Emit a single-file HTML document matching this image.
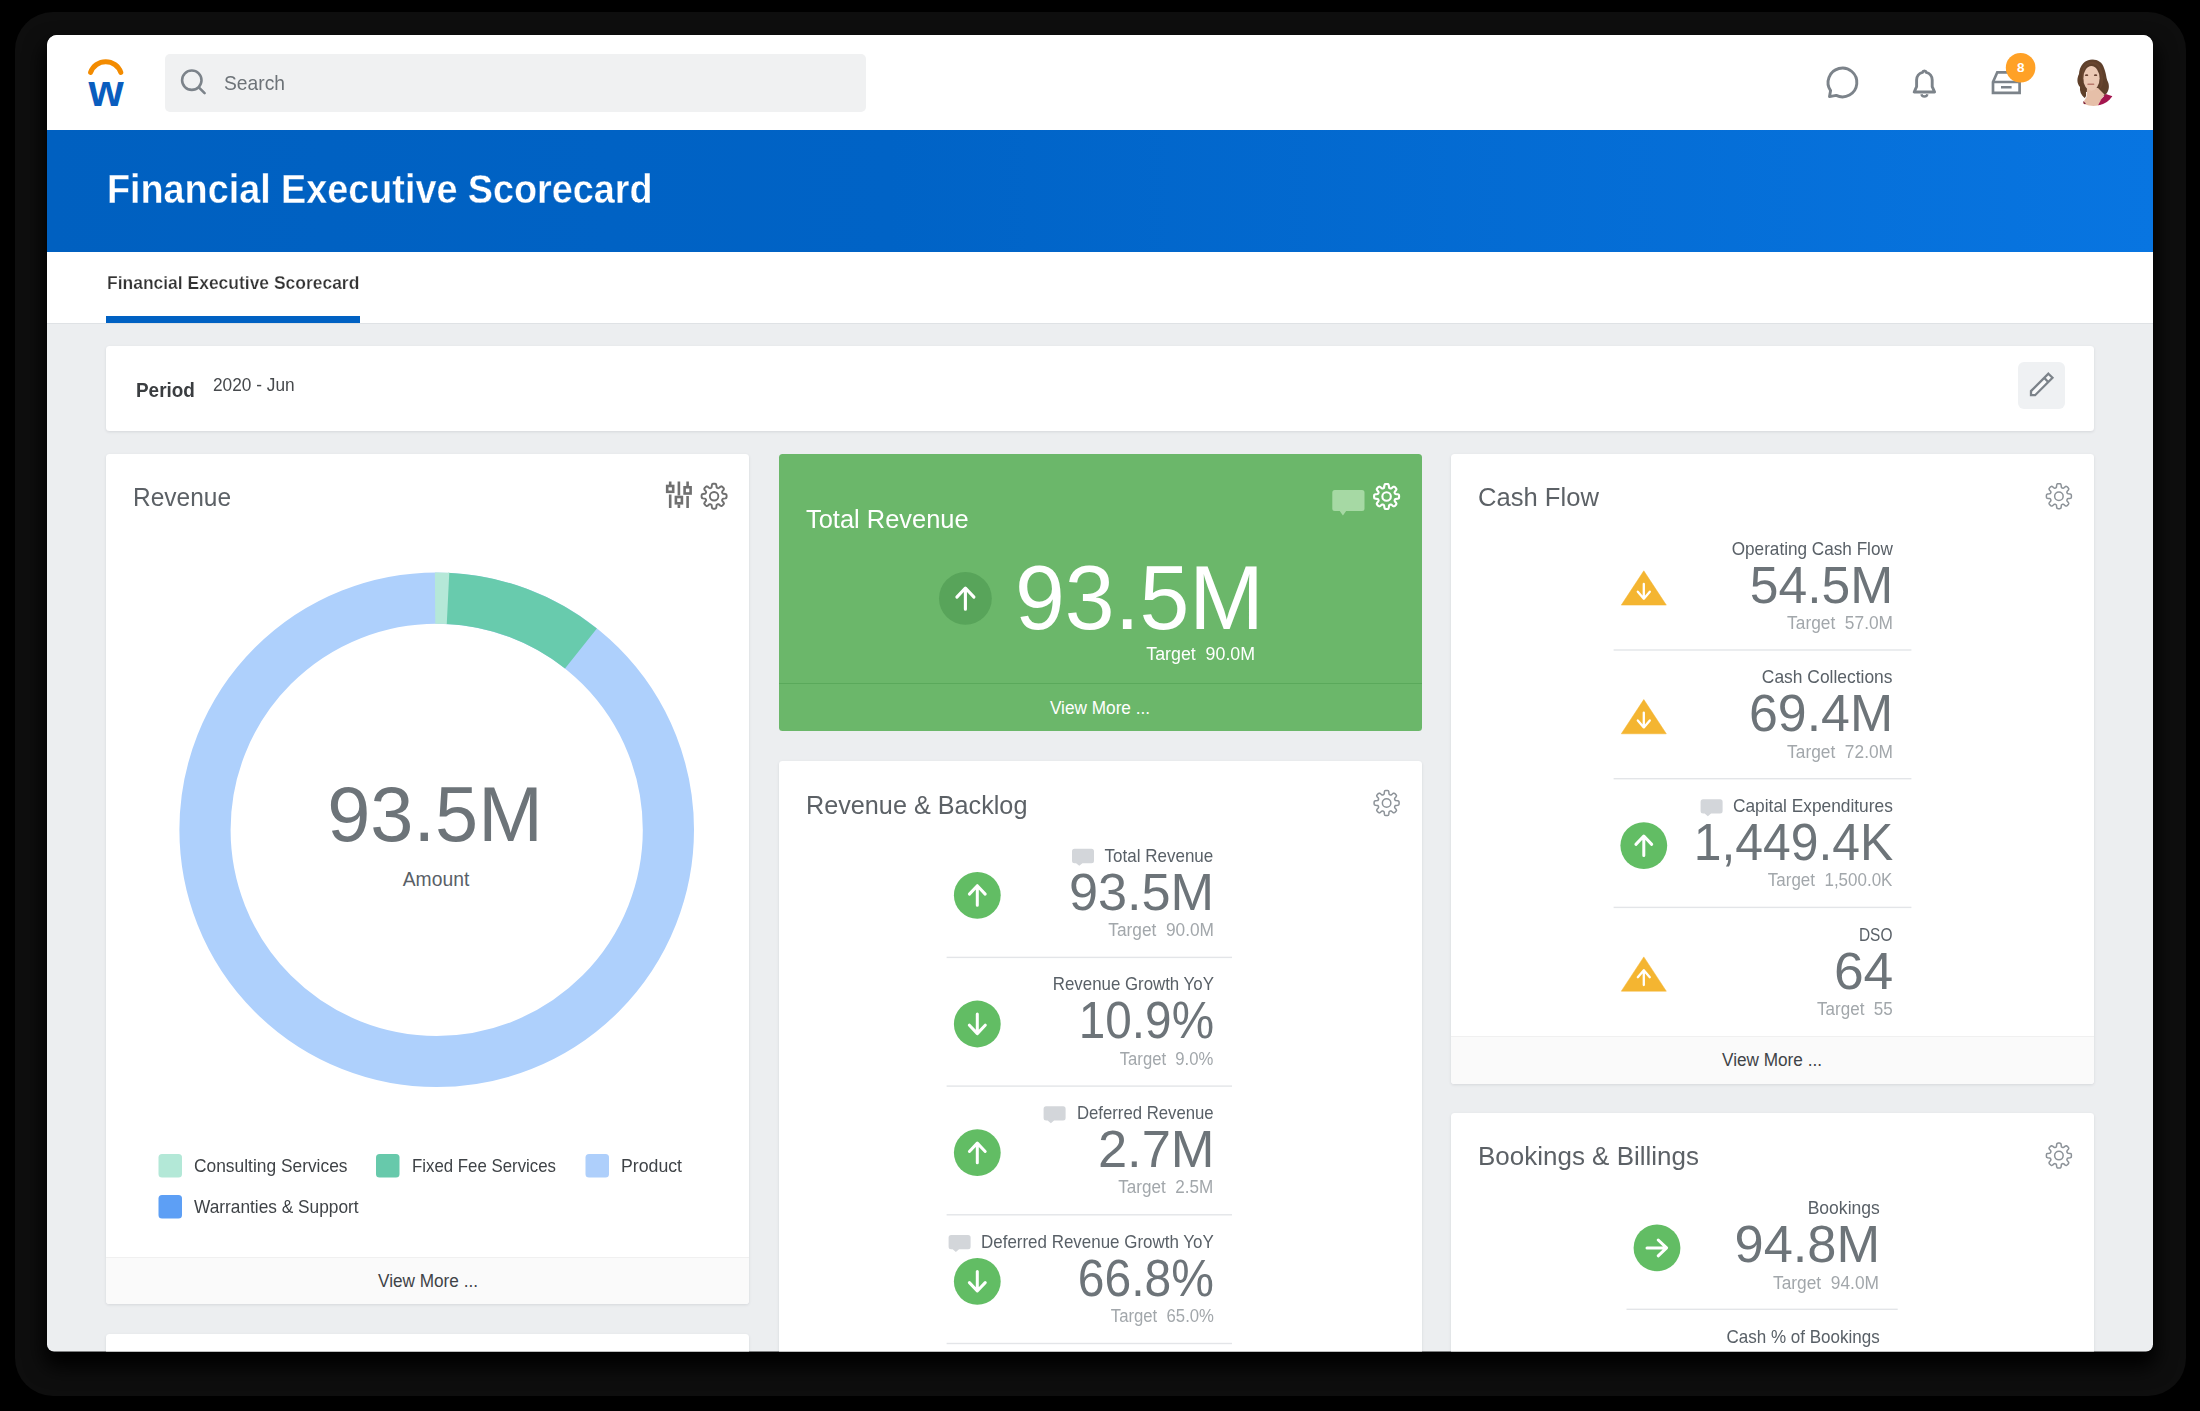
<!DOCTYPE html>
<html lang="en"><head><meta charset="utf-8"><title>Financial Executive Scorecard</title>
<style>
html,body{margin:0;padding:0;background:#000;}
body{width:2200px;height:1411px;position:relative;overflow:hidden;font-family:"Liberation Sans",sans-serif;}
.t{position:absolute;line-height:1;white-space:nowrap;}
.b{position:absolute;}
#shadow{position:absolute;left:15px;top:12px;width:2171px;height:1384px;border-radius:38px;background:#0e0e0e;}
#shadow2{position:absolute;left:47px;top:35px;width:2106px;height:1317px;border-radius:10px;box-shadow:0 12px 20px 3px #000;}
#win{position:absolute;left:0;top:0;width:2200px;height:1411px;clip-path:inset(35px 47px 59.5px 47px round 10px 10px 7px 7px);background:#eceef0;}
.card{position:absolute;background:#fff;border-radius:3.5px;box-shadow:0 1px 3px rgba(60,70,80,.13);}
svg{position:absolute;left:0;top:0;}
</style></head><body>
<div id="shadow"></div><div id="shadow2"></div>
<div id="win">
<div class="b" style="left:47.00px;top:35.00px;width:2106.00px;height:94.50px;background:#fff;"></div>
<div class="b" style="left:47.00px;top:129.50px;width:2106.00px;height:122.50px;background:linear-gradient(90deg,#0060c0 0%,#0063c6 40%,#0875e1 100%);"></div>
<div class="b" style="left:47.00px;top:252.00px;width:2106.00px;height:70.50px;background:#fff;box-shadow:0 1px 0 #dfe2e5;"></div>
<div class="b" style="left:106.00px;top:316.00px;width:254.00px;height:6.50px;background:#0061c3;"></div>
<div class="b" style="left:164.50px;top:53.50px;width:701.50px;height:58.00px;background:#f0f1f2;border-radius:5px;"></div>
<div class="card" style="left:106px;top:345.5px;width:1988px;height:85px;"></div>
<div class="b" style="left:2018.00px;top:362.00px;width:47.00px;height:47.00px;background:#eff1f3;border-radius:6px;"></div>
<div class="card" style="left:106px;top:454px;width:643px;height:850px;overflow:hidden;"><div class="b" style="left:0;top:802.5px;width:643px;height:48px;background:#fafafa;border-top:1px solid #f0f0f0;"></div></div>
<div class="card" style="left:106px;top:1333.5px;width:643px;height:100px;"></div>
<div class="card" style="left:778.5px;top:453.7px;width:643.2px;height:277.7px;background:#6bb76a;border-radius:3.5px;box-shadow:none;"></div>
<div class="b" style="left:778.50px;top:683.00px;width:643.20px;height:1.30px;background:#5aa95b;"></div>
<div class="card" style="left:778.5px;top:760.7px;width:643.2px;height:700px;"></div>
<div class="card" style="left:1450.7px;top:453.7px;width:643.2px;height:630px;overflow:hidden;"><div class="b" style="left:0;top:582px;width:644px;height:48px;background:#fafafa;border-top:1px solid #f0f0f0;"></div></div>
<div class="card" style="left:1450.7px;top:1113px;width:643.2px;height:400px;"></div>
<svg width="2200" height="1411" viewBox="0 0 2200 1411">
<path d="M90.6,72.4 A16,16 0 0 1 120.8,72.4" fill="none" stroke="#f38b00" stroke-width="5" stroke-linecap="round"/>
<circle cx="191.8" cy="80.2" r="9.7" fill="none" stroke="#7c838a" stroke-width="2.6"/><path d="M198.8,87.4 L204.6,93.2" stroke="#7c838a" stroke-width="2.6" stroke-linecap="round"/>
<path d="M1829.5,96.6 L1830.6,90.6 A14.4,14.4 0 1 1 1836.2,95.4 Z" fill="none" stroke="#7c838a" stroke-width="2.9" stroke-linejoin="round"/>
<path d="M1914.2,92 H1934.6 L1932.2,86.6 V80 A7.8,7.8 0 0 0 1926.3,72.4 A1.95,1.95 0 0 0 1922.5,72.4 A7.8,7.8 0 0 0 1916.6,80 V86.6 Z" fill="none" stroke="#7c838a" stroke-width="2.9" stroke-linejoin="round"/><path d="M1921.4,94.2 A3.1,3.1 0 0 0 1927.4,94.2" fill="none" stroke="#7c838a" stroke-width="2.4"/>
<path d="M1993,82 L1997.3,72.3 H2015.2 L2019.6,82 V92.8 H1993 Z M1993,82 H2019.6" fill="none" stroke="#7c838a" stroke-width="2.7" stroke-linejoin="miter"/><path d="M2001,87.3 H2011.6" stroke="#7c838a" stroke-width="2.6"/>
<circle cx="2020.6" cy="67.8" r="14.8" fill="#ffa126"/>
<g><clipPath id="av"><circle cx="2093.5" cy="82.5" r="23.6"/></clipPath><filter id="avb" x="-10%" y="-10%" width="120%" height="120%"><feGaussianBlur stdDeviation="0.55"/></filter><g clip-path="url(#av)"><g filter="url(#avb)"><path d="M2089,60 C2096,58.5 2102,61.5 2104,68 C2106.5,74 2106,78 2108,82 C2110,87 2108.5,92 2105,95.5 C2103,97 2100,95 2099,92 L2086,92 C2086,95 2086.5,97 2084.5,98 C2081,95 2079.5,91 2080,87 C2076.5,83 2077,78 2079,74 C2079.5,67 2083,61.5 2089,60 Z" fill="#5e3f2c"/><path d="M2087,88 L2086.5,97 L2082.5,103.5 L2088,107 H2099 L2101.5,99 L2104.5,94.5 L2098,88 Z" fill="#e6bfa8"/><ellipse cx="2091.4" cy="78.3" rx="8.2" ry="12.2" fill="#ebc9b4"/><path d="M2083.4,74 C2083.6,67 2088,63.5 2093,64.2 C2098,65 2100.5,69.5 2100.2,76 C2100.3,80 2100.6,85 2099.6,89 C2102,88 2103.5,84 2103,78 C2103,70 2100,63 2093.5,61.8 C2087,61 2082.5,66 2081.8,73 C2081.6,77 2082.2,80 2083.2,82 Z" fill="#67452f"/><ellipse cx="2086.6" cy="75.2" rx="1.7" ry="0.9" fill="#6b4535"/><ellipse cx="2095.6" cy="75.2" rx="1.7" ry="0.9" fill="#6b4535"/><path d="M2088,84.2 H2093.6" stroke="#b97a6d" stroke-width="1.5" stroke-linecap="round"/><path d="M2105.8,94 L2112.5,96.3 L2106,104 L2098,105.5 L2101.3,99.2 Z" fill="#a4154f"/><path d="M2083,101 L2086,103.5 L2084,104.5 Z" fill="#7a2040"/></g></g></g>
<g transform="translate(2018 362)" fill="#f9fafb" stroke="#7c838a" stroke-width="2.3" stroke-linejoin="miter"><path d="M30.4,11.7 L34.5,15.8 L17.1,33.2 L13,33.2 L13,29.1 Z"/><path d="M26.2,15.9 L30.3,20"/></g>
<g fill="none" stroke="#707070" stroke-width="2.6"><path d="M670.2,481.6 V485.5 M670.2,494.5 V508"/><rect x="667.2" y="486" width="6" height="5.8" stroke-width="2.6"/><path d="M678.9,481.6 V495.5 M678.9,504.5 V508"/><rect x="675.9" y="497" width="6" height="6.3" stroke-width="2.6"/><path d="M687.6,481.6 V486.5 M687.6,496 V508"/><rect x="684.6" y="487.3" width="6" height="6.2" stroke-width="2.6"/></g>
<path d="M714.1,483.7L714.7,483.7L715.3,483.8L715.9,484.0L716.3,485.0L716.5,486.8L716.7,487.6L717.1,487.8L717.5,488.0L717.9,488.2L718.3,488.2L719.1,487.9L720.4,486.7L721.4,486.3L722.0,486.6L722.5,486.9L722.9,487.4L723.4,487.8L723.7,488.3L724.0,488.9L723.6,489.9L722.4,491.2L722.1,492.0L722.1,492.4L722.3,492.8L722.5,493.2L722.7,493.6L723.5,493.8L725.3,494.0L726.3,494.4L726.5,495.0L726.6,495.6L726.6,496.2L726.6,496.8L726.5,497.4L726.3,498.0L725.3,498.4L723.5,498.6L722.7,498.8L722.5,499.2L722.3,499.6L722.1,500.0L722.1,500.4L722.4,501.2L723.6,502.5L724.0,503.5L723.7,504.1L723.4,504.6L722.9,505.0L722.5,505.5L722.0,505.8L721.4,506.1L720.4,505.7L719.1,504.5L718.3,504.2L717.9,504.2L717.5,504.4L717.1,504.6L716.7,504.8L716.5,505.6L716.3,507.4L715.9,508.4L715.3,508.6L714.7,508.7L714.1,508.7L713.5,508.7L712.9,508.6L712.3,508.4L711.9,507.4L711.7,505.6L711.5,504.8L711.1,504.6L710.7,504.4L710.3,504.2L709.9,504.2L709.1,504.5L707.8,505.7L706.8,506.1L706.2,505.8L705.7,505.5L705.3,505.0L704.8,504.6L704.5,504.1L704.2,503.5L704.6,502.5L705.8,501.2L706.1,500.4L706.1,500.0L705.9,499.6L705.7,499.2L705.5,498.8L704.7,498.6L702.9,498.4L701.9,498.0L701.7,497.4L701.6,496.8L701.6,496.2L701.6,495.6L701.7,495.0L701.9,494.4L702.9,494.0L704.7,493.8L705.5,493.6L705.7,493.2L705.9,492.8L706.1,492.4L706.1,492.0L705.8,491.2L704.6,489.9L704.2,488.9L704.5,488.3L704.8,487.8L705.3,487.4L705.7,486.9L706.2,486.6L706.8,486.3L707.8,486.7L709.1,487.9L709.9,488.2L710.3,488.2L710.7,488.0L711.1,487.8L711.5,487.6L711.7,486.8L711.9,485.0L712.3,484.0L712.9,483.8L713.5,483.7Z" fill="none" stroke="#6f6f6f" stroke-width="1.9" stroke-linejoin="round"/><circle cx="714.1" cy="496.2" r="4.25" fill="none" stroke="#6f6f6f" stroke-width="1.9"/>
<circle cx="436.7" cy="829.8" r="231.7" fill="none" stroke="#aed0fc" stroke-width="51.2"/>
<path d="M446.81,598.32 A231.7,231.7 0 0 1 580.94,648.47" fill="none" stroke="#68cbad" stroke-width="51.2"/>
<path d="M435.08,598.11 A231.7,231.7 0 0 1 448.02,598.38" fill="none" stroke="#b5e8d8" stroke-width="51.2"/>
<rect x="158.5" y="1154" width="23.5" height="23.5" rx="3.5" fill="#b3e8d7"/>
<rect x="376" y="1154" width="23.5" height="23.5" rx="3.5" fill="#67c9ab"/>
<rect x="585.5" y="1154" width="23.5" height="23.5" rx="3.5" fill="#aecffb"/>
<rect x="158.5" y="1195" width="23.5" height="23.5" rx="3.5" fill="#5d9ff5"/>
<circle cx="965.4" cy="598.4" r="26.4" fill="#58a45a"/>
<g transform="rotate(0 965.4 598.4)" fill="none" stroke="#fff" stroke-width="3.1" stroke-linecap="round" stroke-linejoin="round"><path d="M965.4,609.20 V588.53 M956.87,597.10 L965.4,588.03 L973.93,597.10"/></g>
<path d="M1334.8,490 H1362.0 Q1364.5,490 1364.5,492.5 V508.5 Q1364.5,511 1362.0,511 H1346.126 L1342.926,515.6 L1339.7259999999999,511 H1334.8 Q1332.3,511 1332.3,508.5 V492.5 Q1332.3,490 1334.8,490 Z" fill="#a6d9a4"/>
<path d="M1386.6,484.0L1387.2,484.0L1387.8,484.1L1388.4,484.3L1388.8,485.3L1389.0,487.1L1389.2,487.9L1389.6,488.1L1390.0,488.3L1390.4,488.5L1390.8,488.5L1391.6,488.2L1392.9,487.0L1393.9,486.6L1394.5,486.9L1395.0,487.2L1395.4,487.7L1395.9,488.1L1396.2,488.6L1396.5,489.2L1396.1,490.2L1394.9,491.5L1394.6,492.3L1394.6,492.7L1394.8,493.1L1395.0,493.5L1395.2,493.9L1396.0,494.1L1397.8,494.3L1398.8,494.7L1399.0,495.3L1399.1,495.9L1399.1,496.5L1399.1,497.1L1399.0,497.7L1398.8,498.3L1397.8,498.7L1396.0,498.9L1395.2,499.1L1395.0,499.5L1394.8,499.9L1394.6,500.3L1394.6,500.7L1394.9,501.5L1396.1,502.8L1396.5,503.8L1396.2,504.4L1395.9,504.9L1395.4,505.3L1395.0,505.8L1394.5,506.1L1393.9,506.4L1392.9,506.0L1391.6,504.8L1390.8,504.5L1390.4,504.5L1390.0,504.7L1389.6,504.9L1389.2,505.1L1389.0,505.9L1388.8,507.7L1388.4,508.7L1387.8,508.9L1387.2,509.0L1386.6,509.0L1386.0,509.0L1385.4,508.9L1384.8,508.7L1384.4,507.7L1384.2,505.9L1384.0,505.1L1383.6,504.9L1383.2,504.7L1382.8,504.5L1382.4,504.5L1381.6,504.8L1380.3,506.0L1379.3,506.4L1378.7,506.1L1378.2,505.8L1377.8,505.3L1377.3,504.9L1377.0,504.4L1376.7,503.8L1377.1,502.8L1378.3,501.5L1378.6,500.7L1378.6,500.3L1378.4,499.9L1378.2,499.5L1378.0,499.1L1377.2,498.9L1375.4,498.7L1374.4,498.3L1374.2,497.7L1374.1,497.1L1374.1,496.5L1374.1,495.9L1374.2,495.3L1374.4,494.7L1375.4,494.3L1377.2,494.1L1378.0,493.9L1378.2,493.5L1378.4,493.1L1378.6,492.7L1378.6,492.3L1378.3,491.5L1377.1,490.2L1376.7,489.2L1377.0,488.6L1377.3,488.1L1377.8,487.7L1378.2,487.2L1378.7,486.9L1379.3,486.6L1380.3,487.0L1381.6,488.2L1382.4,488.5L1382.8,488.5L1383.2,488.3L1383.6,488.1L1384.0,487.9L1384.2,487.1L1384.4,485.3L1384.8,484.3L1385.4,484.1L1386.0,484.0Z" fill="none" stroke="#fff" stroke-width="2.1" stroke-linejoin="round"/><circle cx="1386.6" cy="496.5" r="4.25" fill="none" stroke="#fff" stroke-width="2.1"/>
<path d="M1386.6,790.5L1387.2,790.5L1387.8,790.6L1388.4,790.8L1388.8,791.8L1389.0,793.6L1389.2,794.4L1389.6,794.6L1390.0,794.8L1390.4,795.0L1390.8,795.0L1391.6,794.7L1392.9,793.5L1393.9,793.1L1394.5,793.4L1395.0,793.7L1395.4,794.2L1395.9,794.6L1396.2,795.1L1396.5,795.7L1396.1,796.7L1394.9,798.0L1394.6,798.8L1394.6,799.2L1394.8,799.6L1395.0,800.0L1395.2,800.4L1396.0,800.6L1397.8,800.8L1398.8,801.2L1399.0,801.8L1399.1,802.4L1399.1,803.0L1399.1,803.6L1399.0,804.2L1398.8,804.8L1397.8,805.2L1396.0,805.4L1395.2,805.6L1395.0,806.0L1394.8,806.4L1394.6,806.8L1394.6,807.2L1394.9,808.0L1396.1,809.3L1396.5,810.3L1396.2,810.9L1395.9,811.4L1395.4,811.8L1395.0,812.3L1394.5,812.6L1393.9,812.9L1392.9,812.5L1391.6,811.3L1390.8,811.0L1390.4,811.0L1390.0,811.2L1389.6,811.4L1389.2,811.6L1389.0,812.4L1388.8,814.2L1388.4,815.2L1387.8,815.4L1387.2,815.5L1386.6,815.5L1386.0,815.5L1385.4,815.4L1384.8,815.2L1384.4,814.2L1384.2,812.4L1384.0,811.6L1383.6,811.4L1383.2,811.2L1382.8,811.0L1382.4,811.0L1381.6,811.3L1380.3,812.5L1379.3,812.9L1378.7,812.6L1378.2,812.3L1377.8,811.8L1377.3,811.4L1377.0,810.9L1376.7,810.3L1377.1,809.3L1378.3,808.0L1378.6,807.2L1378.6,806.8L1378.4,806.4L1378.2,806.0L1378.0,805.6L1377.2,805.4L1375.4,805.2L1374.4,804.8L1374.2,804.2L1374.1,803.6L1374.1,803.0L1374.1,802.4L1374.2,801.8L1374.4,801.2L1375.4,800.8L1377.2,800.6L1378.0,800.4L1378.2,800.0L1378.4,799.6L1378.6,799.2L1378.6,798.8L1378.3,798.0L1377.1,796.7L1376.7,795.7L1377.0,795.1L1377.3,794.6L1377.8,794.2L1378.2,793.7L1378.7,793.4L1379.3,793.1L1380.3,793.5L1381.6,794.7L1382.4,795.0L1382.8,795.0L1383.2,794.8L1383.6,794.6L1384.0,794.4L1384.2,793.6L1384.4,791.8L1384.8,790.8L1385.4,790.6L1386.0,790.5Z" fill="none" stroke="#8c9298" stroke-width="1.5" stroke-linejoin="round"/><circle cx="1386.6" cy="803" r="4.25" fill="none" stroke="#8c9298" stroke-width="1.5"/>
<circle cx="977.3" cy="895.3" r="23.4" fill="#62bd64"/>
<g transform="rotate(0 977.3 895.3)" fill="none" stroke="#fff" stroke-width="3.0" stroke-linecap="round" stroke-linejoin="round"><path d="M977.3,905.30 V886.20 M969.40,894.10 L977.3,885.70 L985.20,894.10"/></g>
<circle cx="977.3" cy="1024" r="23.4" fill="#62bd64"/>
<g transform="rotate(180 977.3 1024)" fill="none" stroke="#fff" stroke-width="3.0" stroke-linecap="round" stroke-linejoin="round"><path d="M977.3,1034.00 V1014.90 M969.40,1022.80 L977.3,1014.40 L985.20,1022.80"/></g>
<circle cx="977.3" cy="1152.7" r="23.4" fill="#62bd64"/>
<g transform="rotate(0 977.3 1152.7)" fill="none" stroke="#fff" stroke-width="3.0" stroke-linecap="round" stroke-linejoin="round"><path d="M977.3,1162.70 V1143.60 M969.40,1151.50 L977.3,1143.10 L985.20,1151.50"/></g>
<circle cx="977.3" cy="1281.4" r="23.4" fill="#62bd64"/>
<g transform="rotate(180 977.3 1281.4)" fill="none" stroke="#fff" stroke-width="3.0" stroke-linecap="round" stroke-linejoin="round"><path d="M977.3,1291.40 V1272.30 M969.40,1280.20 L977.3,1271.80 L985.20,1280.20"/></g>
<rect x="946.6" y="956.6999999999999" width="285.4" height="1.4" fill="#e3e5e8"/>
<rect x="946.6" y="1085.3999999999999" width="285.4" height="1.4" fill="#e3e5e8"/>
<rect x="946.6" y="1214.1" width="285.4" height="1.4" fill="#e3e5e8"/>
<rect x="946.6" y="1342.8" width="285.4" height="1.4" fill="#e3e5e8"/>
<path d="M1074.5,848.8 H1091.5 Q1094,848.8 1094,851.3 V860.6999999999999 Q1094,863.1999999999999 1091.5,863.1999999999999 H1082.46 L1079.26,865.8 L1076.06,863.1999999999999 H1074.5 Q1072,863.1999999999999 1072,860.6999999999999 V851.3 Q1072,848.8 1074.5,848.8 Z" fill="#d3d6da"/>
<path d="M1046.1,1106.2 H1063.1 Q1065.6,1106.2 1065.6,1108.7 V1118.1000000000001 Q1065.6,1120.6000000000001 1063.1,1120.6000000000001 H1054.06 L1050.86,1123.2 L1047.6599999999999,1120.6000000000001 H1046.1 Q1043.6,1120.6000000000001 1043.6,1118.1000000000001 V1108.7 Q1043.6,1106.2 1046.1,1106.2 Z" fill="#d3d6da"/>
<path d="M951.1,1234.9 H968.1 Q970.6,1234.9 970.6,1237.4 V1246.8000000000002 Q970.6,1249.3000000000002 968.1,1249.3000000000002 H959.0600000000001 L955.86,1251.9 L952.66,1249.3000000000002 H951.1 Q948.6,1249.3000000000002 948.6,1246.8000000000002 V1237.4 Q948.6,1234.9 951.1,1234.9 Z" fill="#d3d6da"/>
<path d="M2058.9,483.7L2059.5,483.7L2060.1,483.8L2060.7,484.0L2061.1,485.0L2061.3,486.8L2061.5,487.6L2061.9,487.8L2062.3,488.0L2062.7,488.2L2063.1,488.2L2063.9,487.9L2065.2,486.7L2066.2,486.3L2066.8,486.6L2067.3,486.9L2067.7,487.4L2068.2,487.8L2068.5,488.3L2068.8,488.9L2068.4,489.9L2067.2,491.2L2066.9,492.0L2066.9,492.4L2067.1,492.8L2067.3,493.2L2067.5,493.6L2068.3,493.8L2070.1,494.0L2071.1,494.4L2071.3,495.0L2071.4,495.6L2071.4,496.2L2071.4,496.8L2071.3,497.4L2071.1,498.0L2070.1,498.4L2068.3,498.6L2067.5,498.8L2067.3,499.2L2067.1,499.6L2066.9,500.0L2066.9,500.4L2067.2,501.2L2068.4,502.5L2068.8,503.5L2068.5,504.1L2068.2,504.6L2067.7,505.0L2067.3,505.5L2066.8,505.8L2066.2,506.1L2065.2,505.7L2063.9,504.5L2063.1,504.2L2062.7,504.2L2062.3,504.4L2061.9,504.6L2061.5,504.8L2061.3,505.6L2061.1,507.4L2060.7,508.4L2060.1,508.6L2059.5,508.7L2058.9,508.7L2058.3,508.7L2057.7,508.6L2057.1,508.4L2056.7,507.4L2056.5,505.6L2056.3,504.8L2055.9,504.6L2055.5,504.4L2055.1,504.2L2054.7,504.2L2053.9,504.5L2052.6,505.7L2051.6,506.1L2051.0,505.8L2050.5,505.5L2050.1,505.0L2049.6,504.6L2049.3,504.1L2049.0,503.5L2049.4,502.5L2050.6,501.2L2050.9,500.4L2050.9,500.0L2050.7,499.6L2050.5,499.2L2050.3,498.8L2049.5,498.6L2047.7,498.4L2046.7,498.0L2046.5,497.4L2046.4,496.8L2046.4,496.2L2046.4,495.6L2046.5,495.0L2046.7,494.4L2047.7,494.0L2049.5,493.8L2050.3,493.6L2050.5,493.2L2050.7,492.8L2050.9,492.4L2050.9,492.0L2050.6,491.2L2049.4,489.9L2049.0,488.9L2049.3,488.3L2049.6,487.8L2050.1,487.4L2050.5,486.9L2051.0,486.6L2051.6,486.3L2052.6,486.7L2053.9,487.9L2054.7,488.2L2055.1,488.2L2055.5,488.0L2055.9,487.8L2056.3,487.6L2056.5,486.8L2056.7,485.0L2057.1,484.0L2057.7,483.8L2058.3,483.7Z" fill="none" stroke="#8c9298" stroke-width="1.5" stroke-linejoin="round"/><circle cx="2058.9" cy="496.2" r="4.25" fill="none" stroke="#8c9298" stroke-width="1.5"/>
<path d="M1643.8,570.8 L1666.3,605.1 L1621.3,605.1 Z" fill="#f4b531" stroke="#f4b531" stroke-width="0.5" stroke-linejoin="round"/>
<g transform="rotate(180 1643.8 591.40)" fill="none" stroke="#fff" stroke-width="2.3" stroke-linecap="round" stroke-linejoin="round"><path d="M1643.8,598.90 V584.50 M1637.80,591.10 L1643.8,584.10 L1649.80,591.10"/></g>
<path d="M1643.8,699.5 L1666.3,733.8 L1621.3,733.8 Z" fill="#f4b531" stroke="#f4b531" stroke-width="0.5" stroke-linejoin="round"/>
<g transform="rotate(180 1643.8 720.10)" fill="none" stroke="#fff" stroke-width="2.3" stroke-linecap="round" stroke-linejoin="round"><path d="M1643.8,727.60 V713.20 M1637.80,719.80 L1643.8,712.80 L1649.80,719.80"/></g>
<circle cx="1643.8" cy="845.6" r="23.4" fill="#62bd64"/>
<g transform="rotate(0 1643.8 845.6)" fill="none" stroke="#fff" stroke-width="3.0" stroke-linecap="round" stroke-linejoin="round"><path d="M1643.8,855.60 V836.50 M1635.90,844.40 L1643.8,836.00 L1651.70,844.40"/></g>
<path d="M1643.8,956.9 L1666.3,991.2 L1621.3,991.2 Z" fill="#f4b531" stroke="#f4b531" stroke-width="0.5" stroke-linejoin="round"/>
<g transform="rotate(0 1643.8 977.50)" fill="none" stroke="#fff" stroke-width="2.3" stroke-linecap="round" stroke-linejoin="round"><path d="M1643.8,985.00 V970.60 M1637.80,977.20 L1643.8,970.20 L1649.80,977.20"/></g>
<rect x="1613.6" y="649.3" width="297.8" height="1.4" fill="#e3e5e8"/>
<rect x="1613.6" y="778.0" width="297.8" height="1.4" fill="#e3e5e8"/>
<rect x="1613.6" y="906.6999999999999" width="297.8" height="1.4" fill="#e3e5e8"/>
<path d="M1703.1,799.2 H1720.1 Q1722.6,799.2 1722.6,801.7 V811.1 Q1722.6,813.6 1720.1,813.6 H1711.06 L1707.86,816.2 L1704.6599999999999,813.6 H1703.1 Q1700.6,813.6 1700.6,811.1 V801.7 Q1700.6,799.2 1703.1,799.2 Z" fill="#d3d6da"/>
<path d="M2058.9,1143.1L2059.5,1143.1L2060.1,1143.2L2060.7,1143.4L2061.1,1144.4L2061.3,1146.2L2061.5,1147.0L2061.9,1147.2L2062.3,1147.4L2062.7,1147.6L2063.1,1147.6L2063.9,1147.3L2065.2,1146.1L2066.2,1145.7L2066.8,1146.0L2067.3,1146.3L2067.7,1146.8L2068.2,1147.2L2068.5,1147.7L2068.8,1148.3L2068.4,1149.3L2067.2,1150.6L2066.9,1151.4L2066.9,1151.8L2067.1,1152.2L2067.3,1152.6L2067.5,1153.0L2068.3,1153.2L2070.1,1153.4L2071.1,1153.8L2071.3,1154.4L2071.4,1155.0L2071.4,1155.6L2071.4,1156.2L2071.3,1156.8L2071.1,1157.4L2070.1,1157.8L2068.3,1158.0L2067.5,1158.2L2067.3,1158.6L2067.1,1159.0L2066.9,1159.4L2066.9,1159.8L2067.2,1160.6L2068.4,1161.9L2068.8,1162.9L2068.5,1163.5L2068.2,1164.0L2067.7,1164.4L2067.3,1164.9L2066.8,1165.2L2066.2,1165.5L2065.2,1165.1L2063.9,1163.9L2063.1,1163.6L2062.7,1163.6L2062.3,1163.8L2061.9,1164.0L2061.5,1164.2L2061.3,1165.0L2061.1,1166.8L2060.7,1167.8L2060.1,1168.0L2059.5,1168.1L2058.9,1168.1L2058.3,1168.1L2057.7,1168.0L2057.1,1167.8L2056.7,1166.8L2056.5,1165.0L2056.3,1164.2L2055.9,1164.0L2055.5,1163.8L2055.1,1163.6L2054.7,1163.6L2053.9,1163.9L2052.6,1165.1L2051.6,1165.5L2051.0,1165.2L2050.5,1164.9L2050.1,1164.4L2049.6,1164.0L2049.3,1163.5L2049.0,1162.9L2049.4,1161.9L2050.6,1160.6L2050.9,1159.8L2050.9,1159.4L2050.7,1159.0L2050.5,1158.6L2050.3,1158.2L2049.5,1158.0L2047.7,1157.8L2046.7,1157.4L2046.5,1156.8L2046.4,1156.2L2046.4,1155.6L2046.4,1155.0L2046.5,1154.4L2046.7,1153.8L2047.7,1153.4L2049.5,1153.2L2050.3,1153.0L2050.5,1152.6L2050.7,1152.2L2050.9,1151.8L2050.9,1151.4L2050.6,1150.6L2049.4,1149.3L2049.0,1148.3L2049.3,1147.7L2049.6,1147.2L2050.1,1146.8L2050.5,1146.3L2051.0,1146.0L2051.6,1145.7L2052.6,1146.1L2053.9,1147.3L2054.7,1147.6L2055.1,1147.6L2055.5,1147.4L2055.9,1147.2L2056.3,1147.0L2056.5,1146.2L2056.7,1144.4L2057.1,1143.4L2057.7,1143.2L2058.3,1143.1Z" fill="none" stroke="#8c9298" stroke-width="1.5" stroke-linejoin="round"/><circle cx="2058.9" cy="1155.6" r="4.25" fill="none" stroke="#8c9298" stroke-width="1.5"/>
<circle cx="1657" cy="1247.9" r="23.4" fill="#62bd64"/>
<g transform="rotate(90 1657 1247.9)" fill="none" stroke="#fff" stroke-width="3.0" stroke-linecap="round" stroke-linejoin="round"><path d="M1657,1257.90 V1238.80 M1649.10,1246.70 L1657,1238.30 L1664.90,1246.70"/></g>
<rect x="1626.5" y="1308.6" width="271.2" height="1.4" fill="#e3e5e8"/>
</svg>
<span class="t" style="top:69.05px;font-size:44px;color:#0a5dbe;font-weight:700;left:105.80px;transform:translateX(-50%) scaleX(1.0282);transform-origin:center center;">w</span>
<span class="t" style="top:72.02px;font-size:21px;color:#6d7378;left:223.70px;transform:scaleX(0.9166);transform-origin:left center;">Search</span>
<span class="t" style="top:61.17px;font-size:13.5px;color:#fff;font-weight:700;left:2020.70px;transform:translateX(-50%);transform-origin:center center;">8</span>
<span class="t" style="top:169.09px;font-size:41px;color:#fff;font-weight:700;left:107.00px;transform:scaleX(0.9207);transform-origin:left center;-webkit-text-stroke:0.35px #0061c2;">Financial Executive Scorecard</span>
<span class="t" style="top:273.32px;font-size:19px;color:#333;font-weight:700;left:107.00px;transform:scaleX(0.9189);transform-origin:left center;-webkit-text-stroke:0.25px #fff;">Financial Executive Scorecard</span>
<span class="t" style="top:379.22px;font-size:21px;color:#3a3d40;font-weight:700;left:135.50px;transform:scaleX(0.9012);transform-origin:left center;">Period</span>
<span class="t" style="top:377.13px;font-size:17.8px;color:#46494c;left:213.00px;transform:scaleX(0.9711);transform-origin:left center;">2020 - Jun</span>
<span class="t" style="top:483.99px;font-size:26px;color:#5c6166;left:133.00px;transform:scaleX(0.9416);transform-origin:left center;">Revenue</span>
<span class="t" style="top:775.50px;font-size:77.5px;color:#6d7479;left:435.30px;transform:translateX(-50%) scaleX(1.0004);transform-origin:center center;">93.5M</span>
<span class="t" style="top:870.29px;font-size:19.5px;color:#596067;left:436.40px;transform:translateX(-50%) scaleX(0.9895);transform-origin:center center;">Amount</span>
<span class="t" style="top:1156.84px;font-size:18.5px;color:#3f4347;left:194.00px;transform:scaleX(0.9388);transform-origin:left center;">Consulting Services</span>
<span class="t" style="top:1156.84px;font-size:18.5px;color:#3f4347;left:412.00px;transform:scaleX(0.9094);transform-origin:left center;">Fixed Fee Services</span>
<span class="t" style="top:1156.84px;font-size:18.5px;color:#3f4347;left:621.00px;transform:scaleX(0.9566);transform-origin:left center;">Product</span>
<span class="t" style="top:1197.84px;font-size:18.5px;color:#3f4347;left:194.00px;transform:scaleX(0.9343);transform-origin:left center;">Warranties &amp; Support</span>
<span class="t" style="top:1271.76px;font-size:18px;color:#3f4347;left:427.50px;transform:translateX(-50%) scaleX(0.9549);transform-origin:center center;">View More ...</span>
<span class="t" style="top:505.87px;font-size:26.5px;color:#fff;left:806.00px;transform:scaleX(0.9597);transform-origin:left center;">Total Revenue</span>
<span class="t" style="top:553.02px;font-size:90px;color:#fff;left:1014.80px;transform:scaleX(0.9954);transform-origin:left center;">93.5M</span>
<span class="t" style="top:644.76px;font-size:18px;color:#fff;right:945.20px;transform:scaleX(0.9885);transform-origin:right center;">Target&nbsp;&nbsp;90.0M</span>
<span class="t" style="top:698.76px;font-size:18px;color:#fff;left:1100.00px;transform:translateX(-50%) scaleX(0.9568);transform-origin:center center;">View More ...</span>
<span class="t" style="top:791.99px;font-size:26px;color:#5c6166;left:806.00px;transform:scaleX(0.9695);transform-origin:left center;">Revenue &amp; Backlog</span>
<span class="t" style="top:846.79px;font-size:18.2px;color:#596067;right:986.30px;transform:scaleX(0.9348);transform-origin:right center;">Total Revenue</span>
<span class="t" style="top:866.51px;font-size:51.5px;color:#6d7479;right:985.70px;transform:scaleX(1.0144);transform-origin:right center;">93.5M</span>
<span class="t" style="top:921.99px;font-size:17.5px;color:#a2a7ab;right:986.30px;transform:scaleX(0.9879);transform-origin:right center;">Target&nbsp;&nbsp;90.0M</span>
<span class="t" style="top:975.49px;font-size:18.2px;color:#596067;right:986.30px;transform:scaleX(0.9263);transform-origin:right center;">Revenue Growth YoY</span>
<span class="t" style="top:995.21px;font-size:51.5px;color:#6d7479;right:985.70px;transform:scaleX(0.9258);transform-origin:right center;">10.9%</span>
<span class="t" style="top:1050.69px;font-size:17.5px;color:#a2a7ab;right:986.30px;transform:scaleX(0.9517);transform-origin:right center;">Target&nbsp;&nbsp;9.0%</span>
<span class="t" style="top:1104.19px;font-size:18.2px;color:#596067;right:986.30px;transform:scaleX(0.9198);transform-origin:right center;">Deferred Revenue</span>
<span class="t" style="top:1123.91px;font-size:51.5px;color:#6d7479;right:985.70px;transform:scaleX(1.0183);transform-origin:right center;">2.7M</span>
<span class="t" style="top:1179.39px;font-size:17.5px;color:#a2a7ab;right:986.30px;transform:scaleX(0.9765);transform-origin:right center;">Target&nbsp;&nbsp;2.5M</span>
<span class="t" style="top:1232.89px;font-size:18.2px;color:#596067;right:986.30px;transform:scaleX(0.9318);transform-origin:right center;">Deferred Revenue Growth YoY</span>
<span class="t" style="top:1252.61px;font-size:51.5px;color:#6d7479;right:985.70px;transform:scaleX(0.9327);transform-origin:right center;">66.8%</span>
<span class="t" style="top:1308.09px;font-size:17.5px;color:#a2a7ab;right:986.30px;transform:scaleX(0.9557);transform-origin:right center;">Target&nbsp;&nbsp;65.0%</span>
<span class="t" style="top:484.39px;font-size:26px;color:#5c6166;left:1477.50px;transform:scaleX(0.9843);transform-origin:left center;">Cash Flow</span>
<span class="t" style="top:539.79px;font-size:18.2px;color:#596067;right:307.10px;transform:scaleX(0.943);transform-origin:right center;">Operating Cash Flow</span>
<span class="t" style="top:559.51px;font-size:51.5px;color:#6d7479;right:306.50px;transform:scaleX(1.0018);transform-origin:right center;">54.5M</span>
<span class="t" style="top:614.99px;font-size:17.5px;color:#a2a7ab;right:307.10px;transform:scaleX(0.9897);transform-origin:right center;">Target&nbsp;&nbsp;57.0M</span>
<span class="t" style="top:668.49px;font-size:18.2px;color:#596067;right:307.10px;transform:scaleX(0.957);transform-origin:right center;">Cash Collections</span>
<span class="t" style="top:688.21px;font-size:51.5px;color:#6d7479;right:306.50px;transform:scaleX(1.0067);transform-origin:right center;">69.4M</span>
<span class="t" style="top:743.69px;font-size:17.5px;color:#a2a7ab;right:307.10px;transform:scaleX(0.9897);transform-origin:right center;">Target&nbsp;&nbsp;72.0M</span>
<span class="t" style="top:797.19px;font-size:18.2px;color:#596067;right:307.10px;transform:scaleX(0.9528);transform-origin:right center;">Capital Expenditures</span>
<span class="t" style="top:816.91px;font-size:51.5px;color:#6d7479;right:306.50px;transform:scaleX(0.9676);transform-origin:right center;">1,449.4K</span>
<span class="t" style="top:872.39px;font-size:17.5px;color:#a2a7ab;right:307.10px;transform:scaleX(0.9702);transform-origin:right center;">Target&nbsp;&nbsp;1,500.0K</span>
<span class="t" style="top:925.89px;font-size:18.2px;color:#596067;right:307.10px;transform:scaleX(0.8498);transform-origin:right center;">DSO</span>
<span class="t" style="top:945.61px;font-size:51.5px;color:#6d7479;right:306.50px;transform:scaleX(1.0367);transform-origin:right center;">64</span>
<span class="t" style="top:1001.09px;font-size:17.5px;color:#a2a7ab;right:307.10px;transform:scaleX(0.9739);transform-origin:right center;">Target&nbsp;&nbsp;55</span>
<span class="t" style="top:1051.46px;font-size:18px;color:#3f4347;left:1772.30px;transform:translateX(-50%) scaleX(0.9549);transform-origin:center center;">View More ...</span>
<span class="t" style="top:1143.29px;font-size:26px;color:#5c6166;left:1478.00px;transform:scaleX(0.9994);transform-origin:left center;">Bookings &amp; Billings</span>
<span class="t" style="top:1199.39px;font-size:18.2px;color:#596067;right:320.60px;transform:scaleX(0.9649);transform-origin:right center;">Bookings</span>
<span class="t" style="top:1219.11px;font-size:51.5px;color:#6d7479;right:320.00px;transform:scaleX(1.0172);transform-origin:right center;">94.8M</span>
<span class="t" style="top:1274.59px;font-size:17.5px;color:#a2a7ab;right:320.60px;transform:scaleX(0.9907);transform-origin:right center;">Target&nbsp;&nbsp;94.0M</span>
<span class="t" style="top:1328.09px;font-size:18.2px;color:#596067;right:320.60px;transform:scaleX(0.9366);transform-origin:right center;">Cash % of Bookings</span>
</div></body></html>
